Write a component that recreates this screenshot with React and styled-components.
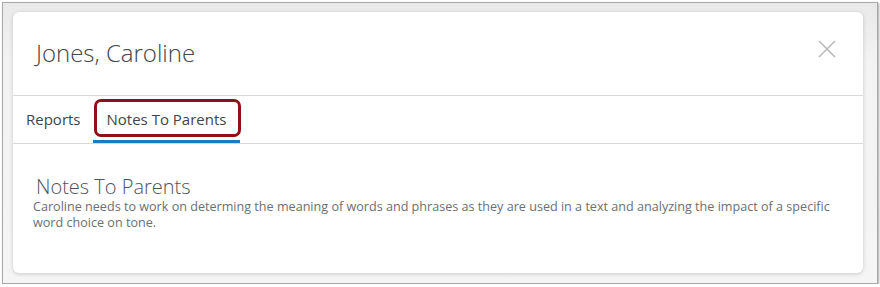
import React from "react";
import styled, { createGlobalStyle } from "styled-components";

const GlobalStyle = createGlobalStyle`
  html, body {
    margin: 0;
    padding: 0;
    background: #ffffff;
    font-family: "Open Sans", "Liberation Sans", sans-serif;
  }
`;

const Frame = styled.div`
  box-sizing: border-box;
  margin: 2px 0 0 2px;
  width: 876px;
  height: 282px;
  border: 1px solid #a8a8a8;
  box-shadow: 1px 1px 2px rgba(0, 0, 0, 0.35);
  background: linear-gradient(180deg, #e9e9e9 0px, #f3f3f3 60px, #f5f5f5 100%);
  padding: 9px 0 0 10px;
`;

const Modal = styled.div`
  position: relative;
  width: 850px;
  height: 261px;
  background: #ffffff;
  border-radius: 6px;
  box-shadow: 0 1px 4px rgba(0, 0, 0, 0.18);
  display: flex;
  flex-direction: column;
`;

const Header = styled.div`
  height: 83px;
  display: flex;
  align-items: center;
  justify-content: space-between;
  padding: 0 26px 0 23px;
  border-bottom: 1px solid #d6d9dc;
`;

const Title = styled.h1`
  margin: 0 0 2px 0;
  font-size: 24px;
  font-weight: 300;
  color: #40454b;
`;

const Close = styled.button`
  border: 0;
  background: none;
  padding: 0;
  width: 20px;
  height: 20px;
  margin-top: -10px;
  cursor: pointer;
`;

const TabBar = styled.div`
  height: 47px;
  display: flex;
  align-items: stretch;
  gap: 12px;
  padding-left: 13px;
  border-bottom: 1px solid #d6d9dc;
`;

const Tab = styled.div`
  position: relative;
  display: flex;
  align-items: center;
  padding: 0 ${(p) => (p.$active ? "14px" : "0")};
  font-size: 15px;
  color: #3f454b;
  border-bottom: 3px solid ${(p) => (p.$active ? "#1b7cc1" : "transparent")};
  padding-top: 2px;
`;

const Callout = styled.span`
  position: absolute;
  left: 1px;
  top: 3px;
  width: 147px;
  height: 38px;
  box-sizing: border-box;
  border: 3px solid #8e1117;
  border-radius: 7px;
`;

const Body = styled.div`
  padding: 31px 20px 0 20px;
`;

const SectionTitle = styled.h2`
  margin: 0 0 0 3px;
  font-size: 20px;
  font-weight: 300;
  color: #4f545a;
  line-height: 24px;
`;

const Note = styled.p`
  margin: 0;
  font-size: 12.6px;
  line-height: 16px;
  color: #6a6f74;
`;

const CloseIcon = () => (
  <svg width="20" height="20" viewBox="0 0 20 20">
    <path d="M2 2 L18 18 M18 2 L2 18" stroke="#b9b9b9" strokeWidth="1.6" fill="none" />
  </svg>
);

export default function App() {
  return (
    <>
      <GlobalStyle />
      <Frame>
        <Modal>
          <Header>
            <Title>Jones, Caroline</Title>
            <Close aria-label="Close">
              <CloseIcon />
            </Close>
          </Header>
          <TabBar>
            <Tab>Reports</Tab>
            <Tab $active>
              Notes To Parents
              <Callout />
            </Tab>
          </TabBar>
          <Body>
            <SectionTitle>Notes To Parents</SectionTitle>
            <Note>
              Caroline needs to work on determing the meaning of words and phrases as they are used in a text and
              analyzing the impact of a specific word choice on tone.
            </Note>
          </Body>
        </Modal>
      </Frame>
    </>
  );
}
